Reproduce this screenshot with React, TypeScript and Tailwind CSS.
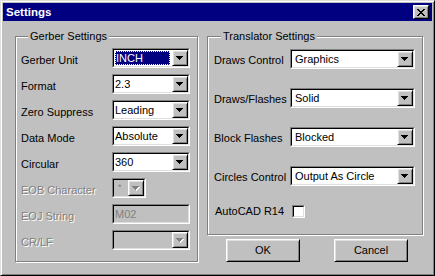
import type { ReactNode } from 'react'

const raised =
  'border border-t-white border-l-white border-r-black border-b-black shadow-[inset_1px_1px_0_#dfdfdf,inset_-1px_-1px_0_#808080] bg-[#c0c0c0]'

function DownArrow({ disabled }: { disabled?: boolean }) {
  const fill = disabled ? '#808080' : '#000'
  return (
    <svg width="8" height="5" viewBox="0 0 8 5" shapeRendering="crispEdges">
      {disabled && (
        <g fill="#fff">
          <rect x="1" y="1" width="7" height="1" />
          <rect x="2" y="2" width="5" height="1" />
          <rect x="3" y="3" width="3" height="1" />
          <rect x="4" y="4" width="1" height="1" />
        </g>
      )}
      <g fill={fill}>
        <rect x="0" y="0" width="7" height="1" />
        <rect x="1" y="1" width="5" height="1" />
        <rect x="2" y="2" width="3" height="1" />
        <rect x="3" y="3" width="1" height="1" />
      </g>
    </svg>
  )
}

function CloseGlyph() {
  const rows = [
    [0, 1, 6, 7],
    [1, 2, 5, 6],
    [2, 3, 4, 5],
    [3, 4],
    [2, 3, 4, 5],
    [1, 2, 5, 6],
    [0, 1, 6, 7],
  ]
  return (
    <svg width="8" height="7" viewBox="0 0 8 7" shapeRendering="crispEdges">
      {rows.map((cols, y) =>
        cols.map((x) => <rect key={`${x}-${y}`} x={x} y={y} width="1" height="1" fill="#000" />)
      )}
    </svg>
  )
}

function Sunken({ className, children }: { className: string; children?: ReactNode }) {
  return (
    <div className={`flex border border-t-[#808080] border-l-[#808080] border-r-white border-b-white ${className}`}>
      <div className="flex flex-1 min-w-0 border border-t-black border-l-black border-r-[#dfdfdf] border-b-[#dfdfdf]">
        {children}
      </div>
    </div>
  )
}

function Combo({
  value,
  width,
  selected,
  disabled,
  pad = 'pl-[1px]',
}: {
  value: string
  width: string
  selected?: boolean
  disabled?: boolean
  pad?: string
}) {
  return (
    <Sunken className={`h-[20px] ${width} ${disabled ? 'bg-[#c0c0c0]' : 'bg-white'}`}>
      {selected ? (
        <div className="flex-1 flex items-center my-[1px] ml-[1px] mr-[2px] bg-[#000080] text-white outline outline-1 outline-dotted outline-[#ffff80] -outline-offset-1 pl-[1px]">
          {value}
        </div>
      ) : (
        <div className={`flex-1 flex items-center ${pad} ${disabled ? 'text-[#808080] text-[9px] items-start pt-[1px] pl-[4px]' : ''}`}>
          {value}
        </div>
      )}
      <div className={`w-[16px] h-[16px] flex items-center justify-center pt-[1px] ${raised}`}>
        <DownArrow disabled={disabled} />
      </div>
    </Sunken>
  )
}

function Label({ children, width, disabled, top }: { children: ReactNode; width: string; disabled?: boolean; top: string }) {
  return (
    <span
      className={`${width} ${top} leading-[13px] whitespace-nowrap ${
        disabled ? 'text-[#808080] [text-shadow:1px_1px_0_#fff]' : ''
      }`}
    >
      {children}
    </span>
  )
}

function Group({ title, className, children }: { title: string; className: string; children: ReactNode }) {
  return (
    <fieldset
      className={`border border-[#808080] shadow-[inset_1px_1px_0_#fff,1px_1px_0_#fff] ${className}`}
    >
      <legend className="ml-[7px] px-[2px] leading-[13px] bg-[#c0c0c0]">{title}</legend>
      {children}
    </fieldset>
  )
}

const gerber = [
  { label: 'Gerber Unit', value: 'INCH', selected: true },
  { label: 'Format', value: '2.3' },
  { label: 'Zero Suppress', value: 'Leading' },
  { label: 'Data Mode', value: 'Absolute' },
  { label: 'Circular', value: '360' },
]

const translator = [
  { label: 'Draws Control', value: 'Graphics' },
  { label: 'Draws/Flashes', value: 'Solid' },
  { label: 'Block Flashes', value: 'Blocked' },
  { label: 'Circles Control', value: 'Output As Circle' },
]

export default function App() {
  return (
    <div className="w-[435px] h-[276px] flex flex-col p-[2px] bg-[#c0c0c0] border border-t-[#dfdfdf] border-l-[#dfdfdf] border-r-black border-b-black shadow-[inset_1px_1px_0_#fff,inset_-1px_-1px_0_#808080] font-['Liberation_Sans',Arial,sans-serif] text-[11px] text-black">
      <div className="h-[18px] flex items-center justify-between pl-[3px] pr-[3px] bg-[#000080]">
        <span className="text-white font-bold text-[11.5px] leading-[14px]">Settings</span>
        <button className={`w-[16px] h-[14px] flex items-center justify-center ${raised}`}>
          <CloseGlyph />
        </button>
      </div>

      <div className="flex gap-[9px] pl-[12px] pt-[9px]">
        <Group title="Gerber Settings" className="w-[183px] pl-[5px] pt-[5px] pb-[11px]">
          <div className="flex flex-col gap-[6px]">
            {gerber.map((r) => (
              <div key={r.label} className="flex items-start h-[20px]">
                <Label width="w-[91px]" top="mt-[6px]">{r.label}</Label>
                <Combo value={r.value} width="w-[78px]" selected={r.selected} />
              </div>
            ))}
            <div className="flex items-start h-[20px]">
              <Label width="w-[91px]" top="mt-[6px]" disabled>EOB Character</Label>
              <Combo value="*" width="w-[34px]" disabled />
            </div>
            <div className="flex items-start h-[20px]">
              <Label width="w-[91px]" top="mt-[6px]" disabled>EOJ String</Label>
              <Sunken className="h-[20px] w-[78px] bg-[#c0c0c0]">
                <div className="flex-1 flex items-center pl-[1px] text-[#808080]">M02</div>
              </Sunken>
            </div>
            <div className="flex items-start h-[20px]">
              <Label width="w-[91px]" top="mt-[6px]" disabled>CR/LF</Label>
              <Combo value="" width="w-[78px]" disabled />
            </div>
          </div>
        </Group>

        <div className="w-[216px] flex flex-col">
          <Group title="Translator Settings" className="pl-[6px] pt-[6px] pb-[16px]">
            <div className="flex flex-col gap-[19px]">
              {translator.map((r) => (
                <div key={r.label} className="flex items-start h-[20px]">
                  <Label width="w-[76px]" top="mt-[5px]">{r.label}</Label>
                  <Combo value={r.value} width="w-[125px]" pad="pl-[3px]" />
                </div>
              ))}
              <div className="flex items-center h-[13px] pl-[1px]">
                <span className="w-[77px] leading-[13px]">AutoCAD R14</span>
                <Sunken className="w-[13px] h-[13px] bg-white" />
              </div>
            </div>
          </Group>
          <div className="flex gap-[34px] pl-[19px] mt-[4px]">
            <button className={`w-[74px] h-[23px] flex items-center justify-center ${raised}`}>OK</button>
            <button className={`w-[74px] h-[23px] flex items-center justify-center ${raised}`}>Cancel</button>
          </div>
        </div>
      </div>
    </div>
  )
}
